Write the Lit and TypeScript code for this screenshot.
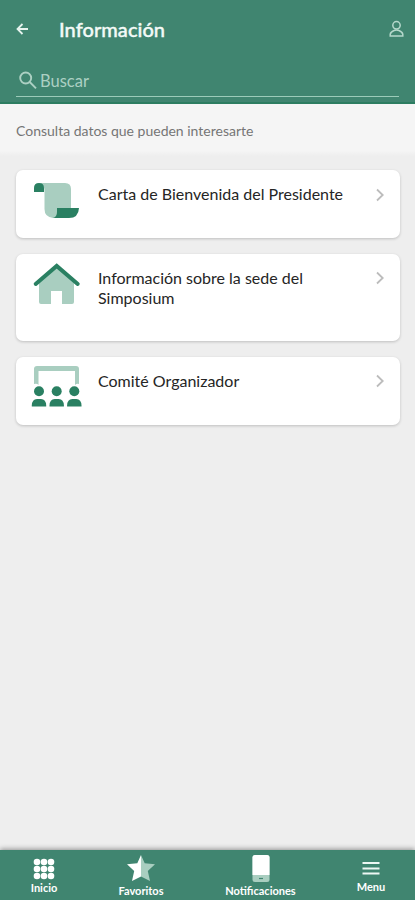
import { LitElement, html, css, svg } from "lit";
import { customElement } from "lit/decorators.js";

const scroll = svg`
  <path d="M43 183H65Q71 183 71 189V208H57V218H53Q44.500 217 44.500 209V192Q45 186 40 183Z" fill="#a9cec0"/>
  <path d="M34 192V188Q34 183 39 183Q44 183 44 188V192Z" fill="#2a8062"/>
  <path d="M57 208H79Q78.500 218 69 218H53Q57 217 57 212Z" fill="#2a8062"/>`;
const house = svg`
  <path d="M39 281L56.500 266L74 281V302Q74 304 72 304H62V291H51V304H41Q39 304 39 302Z" fill="#a9cec0"/>
  <path d="M35.700 284L56.700 266L77.700 284" fill="none" stroke="#2a8062" stroke-width="4" stroke-linecap="round" stroke-linejoin="miter"/>`;
const person = (x: number) => svg`
  <circle cx=${x} cy="391.200" r="5" fill="#2a8062"/>
  <path d=${`M${x - 7.200} 406.500V405.500Q${x - 7} 399 ${x - 2} 399H${x + 2}Q${x + 7} 399 ${x + 7.200} 405.500V406.500Z`} fill="#2a8062"/>`;
const committee = svg`
  <path d="M34 384V369Q34 366 37 366H76Q79 366 79 369V384Q77 383 75 385V371H38.500V385Q37 383 34 384Z" fill="#a9cec0"/>
  ${[39, 56.700, 74.300].map(person)}`;

const items = [
  { title: "Carta de Bienvenida del Presidente", icon: scroll, box: "30 178 54 44" },
  { title: "Información sobre la sede del Simposium", icon: house, box: "30 262 54 44", tall: true },
  { title: "Comité Organizador", icon: committee, box: "30 365 54 44" },
];

@customElement("app-root")
export class AppRoot extends LitElement {
  static styles = css`
    :host { display: flex; flex-direction: column; height: 900px; width: 415px; background: #eee;
      font-family: Lato, "Open Sans", sans-serif; color: #252525; overflow: hidden; }
    * { box-sizing: border-box; }
    svg { display: block; flex: none; }
    header { height: 104px; background: #408570; border-bottom: 2px solid #2d7d61; flex: none; padding: 0 16px; }
    .top { display: flex; align-items: center; height: 58px; margin-right: -5px; }
    .user { margin-top: -1px; }
    h1 { font-size: 20px; line-height: 24px; font-weight: 500; margin: 0 0 1px 29px; color: #f3faf7; flex: 1;
      letter-spacing: .05px; -webkit-text-stroke: .4px #f3faf7; }
    .search { display: flex; align-items: center; height: 39px; padding: 7px 0 0 3px; gap: 3px; border-bottom: 1px solid #9ccbb9;
      color: #acd0c3; font-size: 16.500px; }
    .intro { height: 52px; flex: none; background: linear-gradient(#f5f5f5 90%, #eee); color: #757575;
      font-size: 14px; line-height: 17px; padding: 18px 16px 0; }
    main { padding: 14px 15px 0 16px; display: flex; flex-direction: column; gap: 16px; flex: 1; }
    .card { height: 68px; background: #fff; border-radius: 7px; box-shadow: 0 1px 3px #0003; display: flex; padding: 8px 14px 0 14px; }
    .tall { height: 87px; }
    .title { flex: 1; margin: 6px 0 0 14px; font-size: 16px; line-height: 20px; }
    .label { max-width: 250px; display: block; }
    .tall .label { max-width: 215px; }
    .chev { margin-top: 10px; }
    .card + .card .chev { margin-top: 9px; }
    nav { height: 50px; flex: none; background: #408570; box-shadow: 0 -1px 5px #0006; display: flex; color: #fff; }
    .tab { display: flex; flex-direction: column; align-items: center; font-size: 11px; line-height: 13px; font-weight: 700; }
    .home { width: 88px; padding-top: 8px; }
    .fav { width: 106px; padding-top: 4px; }
    .noti { width: 133px; padding-top: 4px; }
    .menu { width: 88px; padding-top: 10px; }
    .home svg { margin-bottom: 1px; }
    .fav svg, .noti svg { margin-bottom: 2px; }
    .menu svg { margin-bottom: 3px; }
  `;

  render() {
    return html`
      <header>
        <div class="top">
          <svg width="14" height="14" viewBox="0 0 14 14" fill="none" stroke="#e6f3ee" stroke-width="1.800"><path d="M12 7H2M6.500 2L1.500 7L6.500 12"/></svg>
          <h1>Información</h1>
          <svg class="user" width="16" height="18" viewBox="0 0 16 18" fill="none" stroke="#b5d8cb" stroke-width="1.500"><circle cx="8.500" cy="5.300" r="3.700"/><path d="M2.200 16V14.300Q2.500 12 6 10.500Q8.500 9.300 11 10.500Q14.500 12 14.800 14.300V16Z"/></svg>
        </div>
        <div class="search">
          <svg width="18" height="19" viewBox="0 0 18 19" fill="none" stroke="#acd0c3" stroke-width="1.900"><circle cx="6.700" cy="7" r="5.500"/><path d="M10.700 11L17 17.300"/></svg>
          <span>Buscar</span>
        </div>
      </header>
      <div class="intro">Consulta datos que pueden interesarte</div>
      <main>
        ${items.map((i) => html`
          <div class="card ${i.tall ? "tall" : ""}">
            <svg width="54" height="44" viewBox=${i.box}>${i.icon}</svg>
            <div class="title"><span class="label">${i.title}</span></div>
            <svg class="chev" width="12" height="14" viewBox="0 0 12 14" fill="none" stroke="#bcbcbc" stroke-width="1.800"><path d="M3 1.500L8.700 7L3 12.500"/></svg>
          </div>`)}
      </main>
      <nav>
        <div class="tab home">
          <svg width="22" height="22" viewBox="0 0 22 22" fill="#fff">
            ${[4, 11, 18].map((y) => [4, 11, 18].map((x) => svg`<circle cx=${x} cy=${y} r="3.300"/>`))}
          </svg>Inicio
        </div>
        <div class="tab fav">
          <svg width="30" height="28" viewBox="0 0 30 28">
            <path d="M15 1L18.700 9.300L29 10.300L21.800 17L24 27L15 22.500Z" fill="#a9cec0"/>
            <path d="M15 1L11.300 9.300L1 10.300L8.200 17L6 27L15 22.500Z" fill="#fff"/>
          </svg>Favoritos
        </div>
        <div class="tab noti">
          <svg width="18" height="28" viewBox="0 0 18 28"><rect x=".5" y="1" width="17" height="27" rx="2.500" fill="#a9cec0"/><path d="M.5 21V3.500Q.5 1 3 1H15Q17.500 1 17.500 3.500V21Z" fill="#fff"/><path d="M7 24.500H11" stroke="#408570" stroke-width="1.200"/></svg>Notificaciones
        </div>
        <div class="tab menu">
          <svg width="18" height="17" viewBox="0 0 18 17" stroke="#edf7f3" stroke-width="2"><path d="M.5 3H17.500M.5 8.500H17.500M.5 13.500H17.500"/></svg>Menu
        </div>
      </nav>`;
  }
}
